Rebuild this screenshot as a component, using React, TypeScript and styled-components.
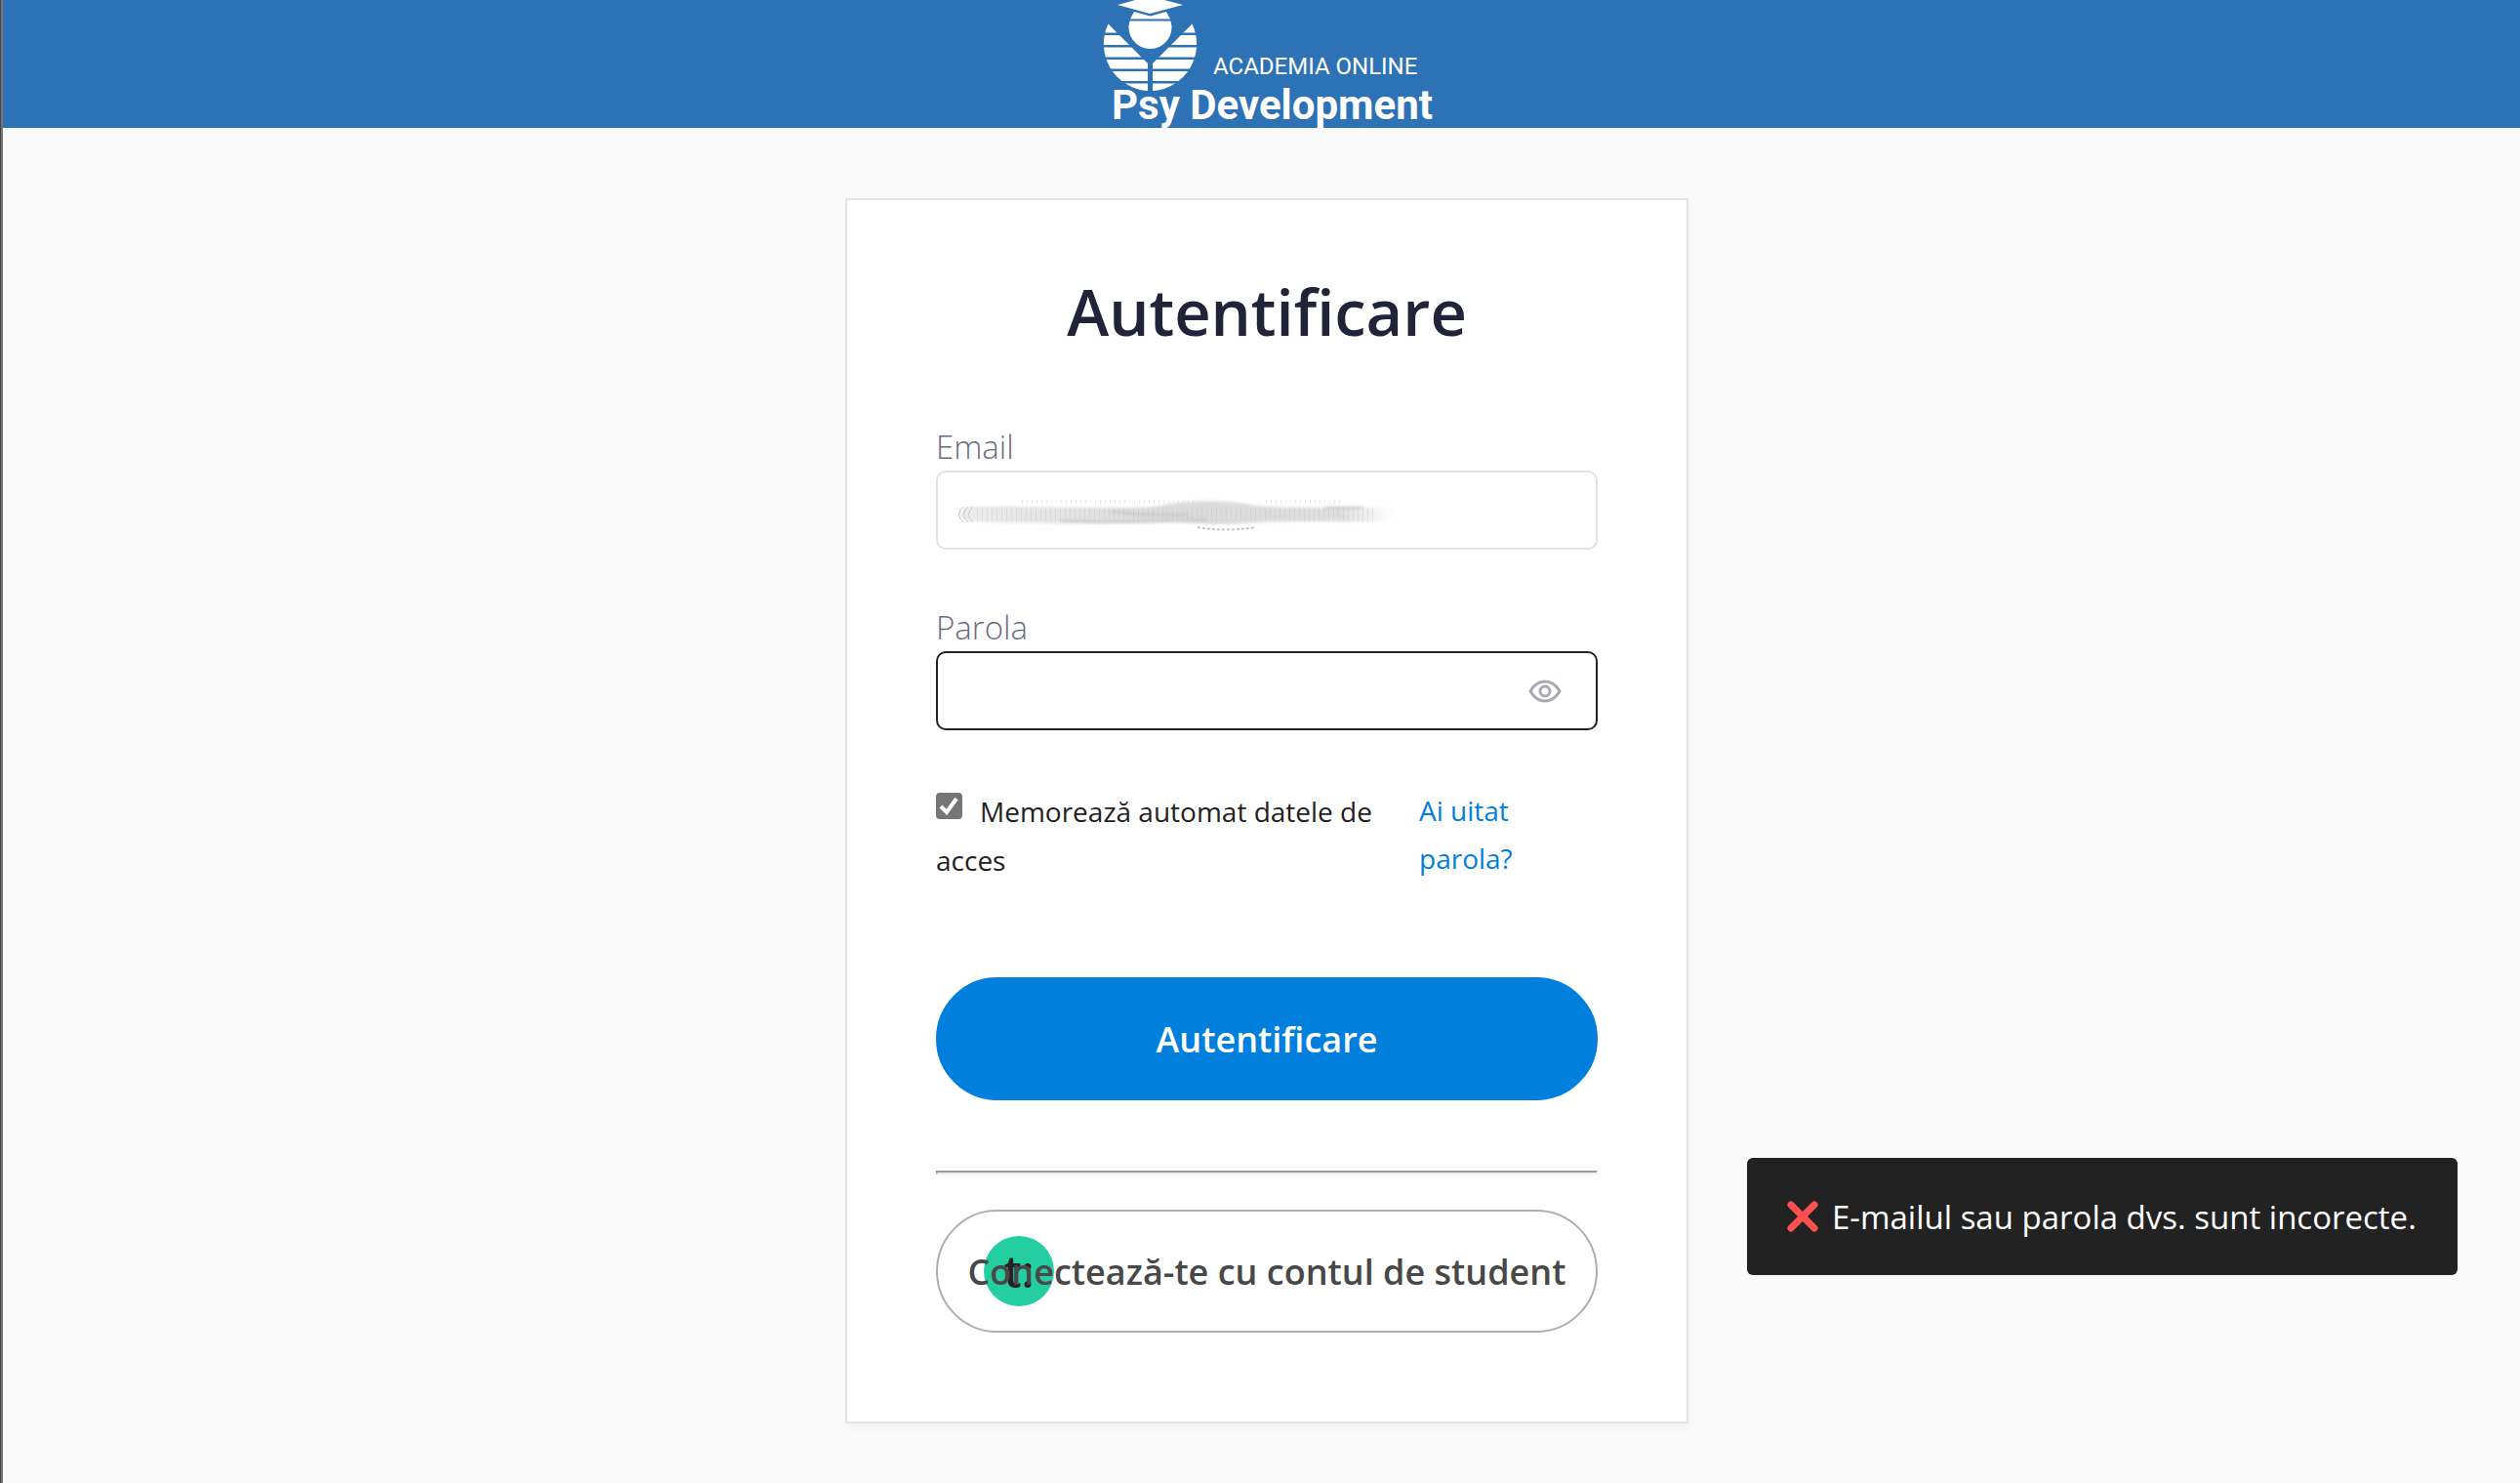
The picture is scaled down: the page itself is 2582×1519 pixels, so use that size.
import React, { useState } from 'react';
import styled, { createGlobalStyle } from 'styled-components';

const GlobalStyle = createGlobalStyle`
  *, *::before, *::after { box-sizing: border-box; }
  body {
    margin: 0;
    background: #fafafa;
    color: #222;
    font-family: "Open Sans", "Noto Sans", sans-serif;
    font-size: 28px;
  }
  button, input { font: inherit; }
`;

const Page = styled.div`
  min-height: 100vh;
  padding-left: 3px;
  background: linear-gradient(to right, #444 1px, #757575 1px, #757575 3px, #fafafa 3px);
`;

const Header = styled.header`
  display: flex;
  justify-content: center;
  align-items: flex-end;
  height: 131px;
  padding-left: 11px;
  background: #2d72b5;
  overflow: hidden;
`;

const Logo = styled.svg`
  display: block;
  width: 340px;
  height: 131px;
  fill: #fff;
  font-family: Roboto, sans-serif;
`;

const Main = styled.main`
  display: flex;
  justify-content: center;
  padding: 72px 0 60px 11px;
`;

const Card = styled.section`
  width: 864px;
  padding: 70px 91px 91px;
  background: #fff;
  border: 2px solid #e3e3e3;
  box-shadow: 2px 4px 8px rgba(0, 0, 0, 0.03);
`;

const Title = styled.h1`
  margin: 0 0 75px;
  color: #212338;
  font-size: 65px;
  font-weight: 600;
  line-height: 88px;
  text-align: center;
`;

const Field = styled.div`
  display: flex;
  flex-direction: column;
  margin-bottom: 60px;
`;

const Label = styled.label`
  margin-bottom: 4px;
  color: #6b6c80;
  font-size: 33px;
  font-weight: 300;
  line-height: 40px;
`;

const InputBox = styled.div<{ $active?: boolean }>`
  display: flex;
  align-items: center;
  height: 81px;
  padding: 0 18px;
  background: #fff;
  border: 2px solid ${(p) => (p.$active ? '#222' : '#e1e1e8')};
  border-radius: 10px;
`;

const Input = styled.input`
  flex: 1;
  min-width: 0;
  height: 100%;
  padding: 0;
  border: 0;
  outline: 0;
  background: transparent;
  font-size: 33px;
`;

const EmailBox = styled(InputBox)`
  position: relative;
`;

const Smudge = styled.svg`
  position: absolute;
  left: 16px;
  top: 24px;
  width: 460px;
  height: 40px;
  pointer-events: none;
`;

const EyeButton = styled.button`
  display: flex;
  margin-right: 17px;
  padding: 0;
  border: 0;
  background: none;
  color: #a8a8b3;
`;

const Options = styled.div`
  display: flex;
  justify-content: space-between;
  margin-top: -2px;
`;

const Remember = styled.div`
  width: 480px;
  line-height: 50px;
`;

const Checkbox = styled.input`
  appearance: none;
  width: 27px;
  height: 27px;
  margin: 0 18px 0 0;
  vertical-align: 3px;
  border-radius: 4px;
  background: #fff;
  border: 2px solid #767676;

  &:checked {
    background: #767676 url("data:image/svg+xml,%3Csvg xmlns='http://www.w3.org/2000/svg' viewBox='0 0 23 23'%3E%3Cpath d='M3 12l6 6L19 4' fill='none' stroke='white' stroke-width='4'/%3E%3C/svg%3E") center / contain;
  }
`;

const Forgot = styled.a`
  width: 183px;
  padding-right: 60px;
  color: #007fdd;
  line-height: 49px;
  text-decoration: none;
`;

const PillButton = styled.button<{ $outline?: boolean }>`
  position: relative;
  display: block;
  width: 100%;
  height: 126px;
  padding: 0;
  border: 2px solid ${(p) => (p.$outline ? '#aeaeae' : '#007fdd')};
  border-radius: 63px;
  background: ${(p) => (p.$outline ? '#fff' : '#007fdd')};
  color: ${(p) => (p.$outline ? '#484848' : '#fff')};
  font-size: 36px;
  font-weight: 600;
  white-space: nowrap;
`;

const Submit = styled(PillButton)`
  margin-top: 95px;
`;

const Divider = styled.hr`
  margin: 72px 0 36px;
  border: 2px solid;
  border-color: #9a9a9a #eee #eee #9a9a9a;
`;

const Badge = styled.span`
  position: absolute;
  left: 47px;
  top: 25px;
  width: 72px;
  height: 72px;
  border-radius: 50%;
  background: #24cea0;
  color: #222;
  font-size: 46px;
  line-height: 70px;
  text-align: center;
`;

const ButtonText = styled.span`
  position: relative;
`;

const Toast = styled.div`
  position: fixed;
  right: 64px;
  bottom: 213px;
  display: flex;
  align-items: center;
  gap: 14px;
  min-width: 728px;
  height: 120px;
  padding: 0 36px 0 41px;
  border-radius: 6px;
  background: #222;
  color: #fff;
  font-size: 33px;
  font-weight: 500;
  white-space: nowrap;
`;

function BrandLogo() {
  return (
    <Logo viewBox="18 0 340 131" role="img" aria-label="Academia Online Psy Development">
      <defs>
        <clipPath id="stripes">
          <path d="M0 0h130v33.5H0zM0 36h130v10H0zM0 48.5h130v10H0zM0 61h130v9.5H0zM0 73h130v10H0zM0 85.5h130v10H0z" />
        </clipPath>
      </defs>
      <path d="M35 5L68-4l34 9-34 9z" />
      <path d="M52 12l16.500 4.500L85 12l4 7.500H48zM47.500 21.500h42a22 22 0 1 1-42 0z" />
      <g clipPath="url(#stripes)">
        <path d="M25.500 24.500L66 65v28A48 48 0 0 1 25.500 24.500z" />
        <path d="M111.500 24.500L71 65v28A48 48 0 0 0 111.500 24.500z" />
      </g>
      <text x="133" y="76" fontSize="24">ACADEMIA ONLINE</text>
      <text x="29" y="122" fontSize="42" fontWeight="700">Psy Development</text>
    </Logo>
  );
}

function EyeIcon() {
  return (
    <svg width="34" height="24" viewBox="0 0 34 24" fill="none" stroke="currentColor" strokeWidth="3">
      <path d="M2 12C6 5 11 2 17 2s11 3 15 10c-4 7-9 10-15 10S6 19 2 12z" />
      <circle cx="17" cy="12" r="5" />
    </svg>
  );
}

function Scribble() {
  return (
    <Smudge viewBox="0 0 460 40" aria-hidden="true">
      <defs>
        <linearGradient id="fade" x1="0" x2="1">
          <stop offset="0" stopColor="#ececec" />
          <stop offset="0.5" stopColor="#dadada" />
          <stop offset="0.88" stopColor="#dedede" />
          <stop offset="1" stopColor="#fff" />
        </linearGradient>
        <filter id="soft" x="-5%" y="-50%" width="110%" height="200%">
          <feGaussianBlur stdDeviation="1.5" />
        </filter>
      </defs>
      <g filter="url(#soft)">
        <path
          d="M13 11C60 9 150 14 205 11c30-6 70-9 105-1 40 3 90 1 140 2v14c-50 1-90-1-140 1-40 4-60 1-90-1-60 4-150 2-207 0-8-3-8-12 0-15z"
          fill="url(#fade)"
        />
        <path d="M110 25q60 4 150-1M380 12h40M160 16q50 5 80 3" fill="none" stroke="#c4c4c4" strokeWidth="2" />
      </g>
      <path d="M10 11q-9 8 0 16M15 11q-9 8 0 16M20 11q-9 8 0 16" fill="none" stroke="#c8c8c8" />
      <path d="M24 19H430" stroke="#bdbdbd" strokeWidth="14" strokeDasharray="1 4" opacity="0.25" />
      <path d="M70 6H250M320 6H400" stroke="#ccc" strokeWidth="4" strokeDasharray="1 4" opacity="0.4" />
      <path d="M250 32q28 5 60 0" fill="none" stroke="#c4c4c4" strokeWidth="2" strokeDasharray="3 2" />
    </Smudge>
  );
}

export default function App() {
  const [visible, setVisible] = useState(false);
  return (
    <Page>
      <GlobalStyle />
      <Header>
        <BrandLogo />
      </Header>
      <Main>
        <Card>
          <Title>Autentificare</Title>
          <form onSubmit={(e) => e.preventDefault()}>
            <Field>
              <Label htmlFor="email">Email</Label>
              <EmailBox>
                <Input id="email" type="email" />
                <Scribble />
              </EmailBox>
            </Field>
            <Field>
              <Label htmlFor="password">Parola</Label>
              <InputBox $active>
                <Input id="password" type={visible ? 'text' : 'password'} />
                <EyeButton type="button" aria-label="Parola" onClick={() => setVisible(!visible)}>
                  <EyeIcon />
                </EyeButton>
              </InputBox>
            </Field>
            <Options>
              <Remember>
                <Checkbox id="remember" type="checkbox" defaultChecked />
                <label htmlFor="remember">Memorează automat datele de acces</label>
              </Remember>
              <Forgot href="#">Ai uitat parola?</Forgot>
            </Options>
            <Submit type="submit">Autentificare</Submit>
          </form>
          <Divider />
          <PillButton type="button" $outline>
            <Badge>t:</Badge>
            <ButtonText>Conectează-te cu contul de student</ButtonText>
          </PillButton>
        </Card>
      </Main>
      <Toast role="alert">
        <svg width="32" height="32" viewBox="0 0 32 32" stroke="#ff4f4f" strokeWidth="7" strokeLinecap="round">
          <path d="M4 4l24 24M28 4L4 28" />
        </svg>
        E-mailul sau parola dvs. sunt incorecte.
      </Toast>
    </Page>
  );
}
